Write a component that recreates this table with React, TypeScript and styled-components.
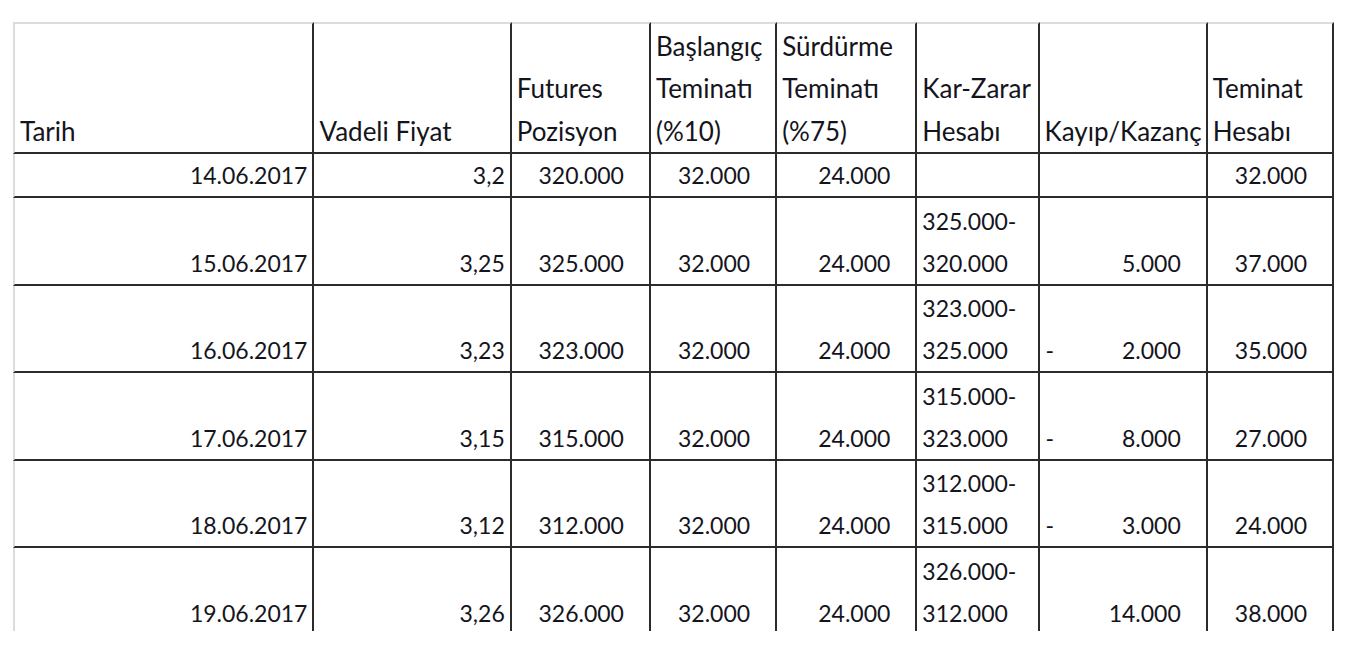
import styled, {createGlobalStyle} from "styled-components";

type Align = 'left' | 'right' | 'acct'

interface Column {
    title: string[],
    width: number,
    align: Align
}

interface Row {
    date: string,
    price: string,
    position: string,
    initial: string,
    maintenance: string,
    pnl: string[],
    change: string,
    loss: boolean,
    account: string
}

const columns: Column[] = [
    {title: ['Tarih'], width: 301, align: 'right'},
    {title: ['Vadeli Fiyat'], width: 197, align: 'right'},
    {title: ['Futures', 'Pozisyon'], width: 139, align: 'acct'},
    {title: ['Başlangıç', 'Teminatı', '(%10)'], width: 126, align: 'acct'},
    {title: ['Sürdürme', 'Teminatı', '(%75)'], width: 140, align: 'acct'},
    {title: ['Kar-Zarar', 'Hesabı'], width: 122, align: 'left'},
    {title: ['Kayıp/Kazanç'], width: 168, align: 'acct'},
    {title: ['Teminat', 'Hesabı'], width: 126, align: 'acct'},
]

const rows: Row[] = [
    {date: '14.06.2017', price: '3,2', position: '320.000', initial: '32.000', maintenance: '24.000', pnl: [], change: '', loss: false, account: '32.000'},
    {date: '15.06.2017', price: '3,25', position: '325.000', initial: '32.000', maintenance: '24.000', pnl: ['325.000-', '320.000'], change: '5.000', loss: false, account: '37.000'},
    {date: '16.06.2017', price: '3,23', position: '323.000', initial: '32.000', maintenance: '24.000', pnl: ['323.000-', '325.000'], change: '2.000', loss: true, account: '35.000'},
    {date: '17.06.2017', price: '3,15', position: '315.000', initial: '32.000', maintenance: '24.000', pnl: ['315.000-', '323.000'], change: '8.000', loss: true, account: '27.000'},
    {date: '18.06.2017', price: '3,12', position: '312.000', initial: '32.000', maintenance: '24.000', pnl: ['312.000-', '315.000'], change: '3.000', loss: true, account: '24.000'},
    {date: '19.06.2017', price: '3,26', position: '326.000', initial: '32.000', maintenance: '24.000', pnl: ['326.000-', '312.000'], change: '14.000', loss: false, account: '38.000'},
]

// excel puts wrapped text on separate lines, keep them explicit
function lines(parts: string[]) {
    return parts.map((p, i) => <span key={i}>{i > 0 && <br/>}{p}</span>)
}

export default function App() {
    return <>
        <GlobalStyle/>
        <Sheet>
            <Table>
                <colgroup>
                    {columns.map((c, i) => <col key={i} style={{width: c.width}}/>)}
                </colgroup>
                <thead>
                    <tr>
                        {columns.map((c, i) =>
                            <HeadCell key={i} $first={i === 0}>{lines(c.title)}</HeadCell>)}
                    </tr>
                </thead>
                <tbody>
                    {rows.map((r, i) => {
                        const tall = r.pnl.length > 1
                        return <tr key={i}>
                            <Cell $align='right' $first $tall={tall}>{r.date}</Cell>
                            <Cell $align='right' $tall={tall}>{r.price}</Cell>
                            <Cell $align='acct' $tall={tall}>{r.position}</Cell>
                            <Cell $align='acct' $tall={tall}>{r.initial}</Cell>
                            <Cell $align='acct' $tall={tall}>{r.maintenance}</Cell>
                            <Cell $align='left' $tall={tall}>{lines(r.pnl)}</Cell>
                            <Cell $align='acct' $tall={tall}>
                                {r.loss && <Minus>-</Minus>}
                                {r.change}
                            </Cell>
                            <Cell $align='acct' $tall={tall}>{r.account}</Cell>
                        </tr>
                    })}
                </tbody>
            </Table>
        </Sheet>
    </>
}

const GlobalStyle = createGlobalStyle`
    * {
        box-sizing: border-box;
    }

    body {
        margin: 0;
        padding: 22px 0 0 13px;
        background: #fff;
        font-family: Lato, "Open Sans", sans-serif;
        color: #14141c;
    }
`

const Sheet = styled.div`
    width: 1321px;
    height: 609px;
    overflow: hidden;
`

const Table = styled.table`
    table-layout: fixed;
    border-collapse: separate;
    border-spacing: 0;
    width: 1321px;
    font-size: 23px;
    line-height: 42px;
`

const HeadCell = styled.th<{ $first?: boolean }>`
    height: 132px;
    padding: 0 0 0 5px;
    text-align: left;
    vertical-align: bottom;
    font-size: 26px;
    font-weight: 400;
    line-height: 42.5px;
    white-space: nowrap;
    border-top: 2px solid #dcdcdc;
    border-left: ${p => p.$first ? '2px solid #dcdcdc' : 'none'};
    border-right: 2px solid #2b2b2b;
    border-bottom: 2px solid #2b2b2b;
`

const Cell = styled.td<{ $align: Align, $first?: boolean, $tall?: boolean }>`
    height: ${p => p.$tall ? '87.5px' : '44px'};
    padding: ${p => p.$align === 'left' ? '0 0 0 5px' : p.$align === 'acct' ? '0 25px 0 6px' : '0 5px 0 0'};
    text-align: ${p => p.$align === 'left' ? 'left' : 'right'};
    vertical-align: bottom;
    white-space: nowrap;
    border-left: ${p => p.$first ? '2px solid #dcdcdc' : 'none'};
    border-right: 2px solid #2b2b2b;
    border-bottom: 2px solid #2b2b2b;
`

const Minus = styled.span`
    float: left;
`
